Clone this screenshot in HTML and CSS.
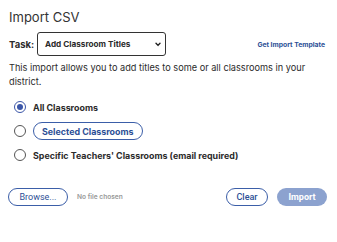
FILE: index.html
```html
<!DOCTYPE html>
<html lang="en">
<head>
    <meta charset="UTF-8">
    <meta name="viewport" content="width=device-width, initial-scale=1.0">
    <title>Import CSV</title>
    <link rel="stylesheet" href="styles.css">
</head>
<body>
    <div class="dialog">
        <h2 class="title">Import CSV</h2>

        <div class="task-row">
            <label class="task-label" for="task">Task:</label>
            <div class="select-box">
                <span class="select-text">Add Classroom Titles</span>
                <svg class="chevron" width="6" height="5" viewBox="0 0 6 5">
                    <path d="M1 1.2 L3 3.4 L5 1.2" fill="none" stroke="#222" stroke-width="1.4" stroke-linecap="round" stroke-linejoin="round"/>
                </svg>
            </div>
            <a class="template-link" href="#">Get Import Template</a>
        </div>

        <p class="description">This import allows you to add titles to some or all classrooms in your district.</p>

        <div class="options">
            <div class="option">
                <span class="radio checked"></span>
                <span class="option-text">All Classrooms</span>
            </div>
            <div class="option">
                <span class="radio"></span>
                <span class="pill-option">Selected Classrooms</span>
            </div>
            <div class="option">
                <span class="radio"></span>
                <span class="option-text">Specific Teachers' Classrooms (email required)</span>
            </div>
        </div>

        <div class="footer">
            <div class="file-group">
                <button class="btn btn-outline browse">Browse...</button>
                <span class="no-file">No file chosen</span>
            </div>
            <div class="actions">
                <button class="btn btn-outline clear">Clear</button>
                <button class="btn btn-filled">Import</button>
            </div>
        </div>
    </div>
</body>
</html>
```

FILE: styles.css
```css
body {
    margin: 0;
    background-color: white;
    font-family: Inter, "Noto Sans", sans-serif;
    color: #2b2b2b;
}

.dialog {
    width: 337px;
    height: 242px;
    box-sizing: border-box;
    padding: 9px 9px 0 9px;
}

.title {
    margin: 0;
    font-size: 13px;
    font-weight: 400;
    line-height: 16px;
    color: #333;
}

.task-row {
    display: flex;
    align-items: center;
    margin-top: 7px;
}

.task-label {
    font-size: 9.5px;
    font-weight: 700;
    width: 28px;
}

.select-box {
    width: 129px;
    height: 24px;
    box-sizing: border-box;
    border: 1px solid #333;
    border-radius: 3px;
    display: flex;
    align-items: center;
    justify-content: space-between;
    padding: 0 4px 0 7px;
}

.select-text {
    font-size: 8.2px;
    font-weight: 700;
}

.template-link {
    margin-left: auto;
    margin-right: 3px;
    font-size: 6.8px;
    font-weight: 700;
    color: #2c4f96;
    text-decoration: none;
}

.description {
    margin: 5px 0 0 0;
    font-size: 9.2px;
    line-height: 14px;
    color: #2b2b2b;
}

.options {
    margin-top: 9px;
    display: flex;
    flex-direction: column;
    gap: 6px;
}

.option {
    display: flex;
    align-items: center;
    height: 18px;
}

.radio {
    width: 10px;
    height: 10px;
    border: 1px solid #555;
    border-radius: 50%;
    margin-left: 5px;
    margin-right: 7px;
    display: flex;
    align-items: center;
    justify-content: center;
}

.radio.checked {
    border-color: #3b56a8;
}

.radio.checked::after {
    content: "";
    width: 6px;
    height: 6px;
    border-radius: 50%;
    background-color: #3b56a8;
}

.option-text {
    font-size: 8.9px;
    font-weight: 700;
}

.pill-option {
    font-size: 8.9px;
    font-weight: 700;
    color: #2c4f96;
    border: 1px solid #3b5ea8;
    border-radius: 10px;
    height: 18px;
    box-sizing: border-box;
    padding: 0 8px;
    display: flex;
    align-items: center;
}

.footer {
    margin-top: 24px;
    display: flex;
    justify-content: space-between;
    align-items: center;
}

.file-group {
    display: flex;
    align-items: center;
}

.btn {
    font-family: Roboto, "Noto Sans", sans-serif;
    height: 18px;
    border-radius: 9px;
    font-size: 9px;
    padding: 0;
    box-sizing: border-box;
}

.btn-outline {
    background-color: white;
    border: 1px solid #3b5ea8;
    color: #2c4f96;
}

.browse {
    width: 60px;
    margin-left: -1px;
}

.no-file {
    margin-left: 9px;
    font-size: 6.6px;
    color: #999;
    font-weight: 600;
}

.actions {
    display: flex;
    gap: 9px;
    margin-right: 1px;
}

.clear {
    width: 42px;
    font-weight: 500;
}

.btn-filled {
    width: 50px;
    border: none;
    background-color: #8ca2cf;
    color: white;
    font-weight: 700;
}
```
